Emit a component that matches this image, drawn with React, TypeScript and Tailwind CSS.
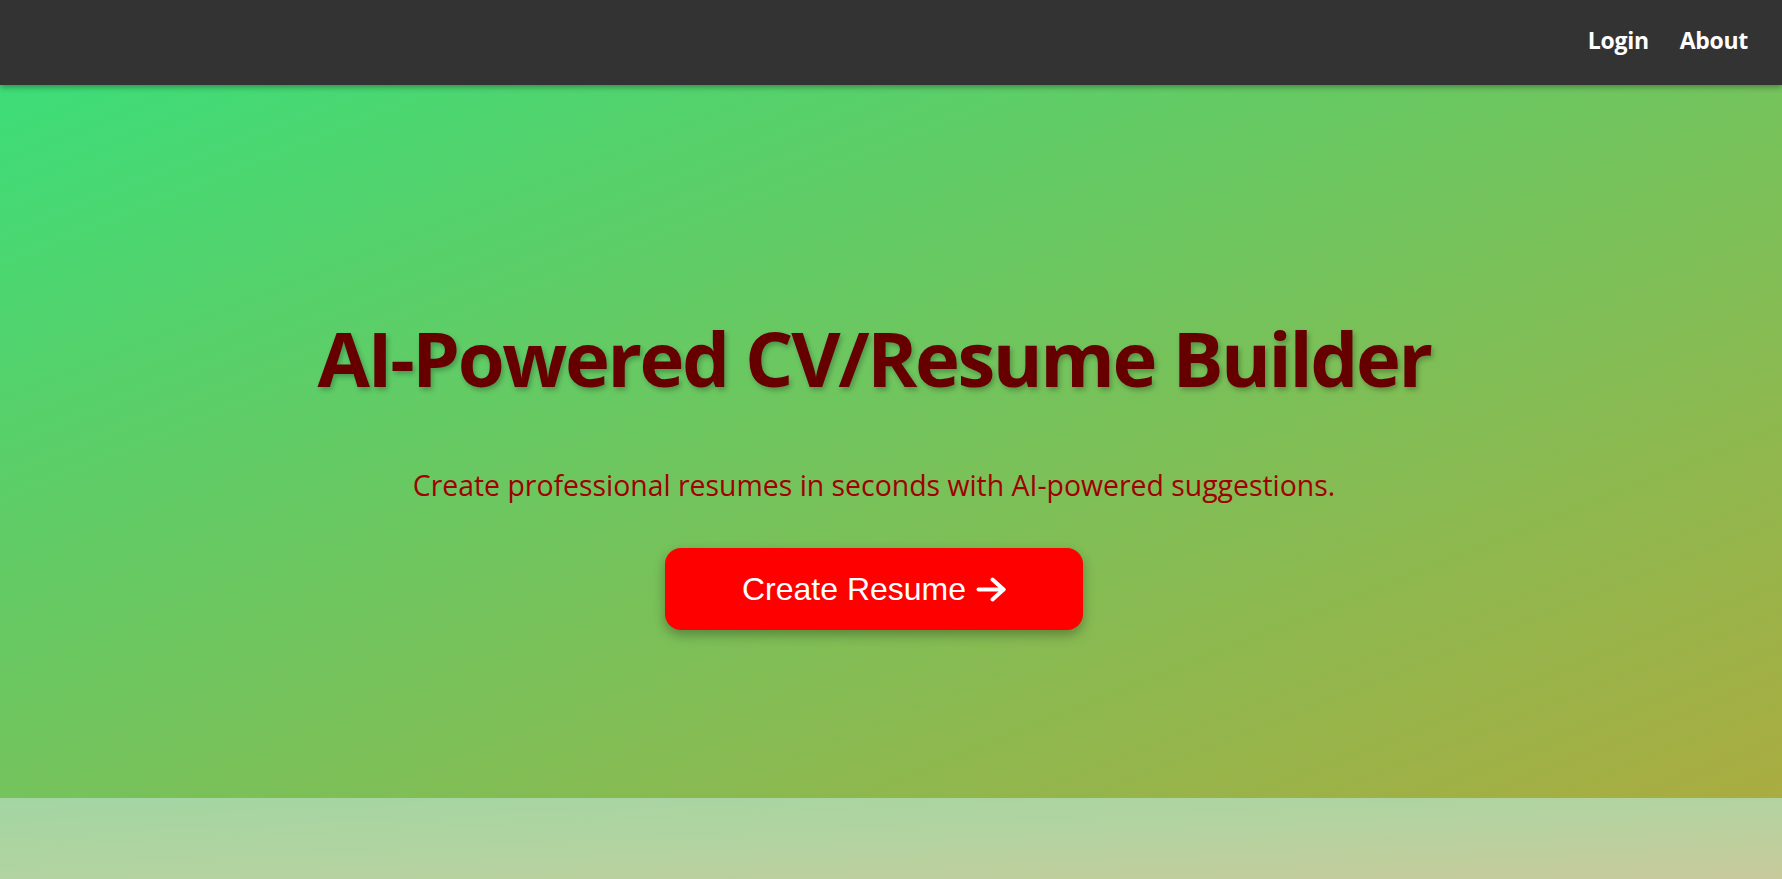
function Navbar() {
  return (
    <nav className="relative z-10 flex h-[85px] items-center justify-end bg-[#333333] pr-[34px] shadow-[0_2px_6px_rgba(0,0,0,0.35)]">
      <ul className="flex items-center gap-[31px] pb-[4px] font-['Open_Sans',sans-serif] text-[23px] font-bold tracking-[-0.3px] text-white">
        <li>
          <a href="#">Login</a>
        </li>
        <li>
          <a href="#">About</a>
        </li>
      </ul>
    </nav>
  );
}

function ArrowIcon() {
  return (
    <svg width="30" height="25" viewBox="0 0 30 25" fill="none" stroke="currentColor" strokeWidth="4" strokeLinecap="round" strokeLinejoin="round">
      <path d="M2.5 12.5h25" />
      <path d="M16.5 2.5l11 10-11 10" />
    </svg>
  );
}

function Hero() {
  return (
    <section className="flex h-[713px] flex-col items-center bg-[linear-gradient(to_bottom_right,#3ddd78,#74c35c_50%,#aaac40)] pr-[34px] pt-[225px]">
      <h1 className="font-['Open_Sans',sans-serif] text-[76px] leading-[96px] font-bold tracking-[-2.4px] text-[#660000] [text-shadow:2px_3px_5px_rgba(0,0,0,0.25)]">
        AI-Powered CV/Resume Builder
      </h1>
      <p className="mt-[58px] font-['Open_Sans',sans-serif] text-[28.4px] leading-[42px] text-[#a00000]">
        Create professional resumes in seconds with AI-powered suggestions.
      </p>
      <button className="mt-[42px] flex h-[82px] w-[418px] items-center justify-center gap-[10px] rounded-[16px] bg-[#ff0000] font-['Liberation_Sans',Arial,sans-serif] text-[32px] text-white shadow-[0_5px_12px_rgba(0,0,0,0.3)]">
        Create Resume
        <ArrowIcon />
      </button>
    </section>
  );
}

export default function App() {
  return (
    <div className="min-h-screen">
      <Navbar />
      <Hero />
      <section className="h-[81px] bg-[linear-gradient(to_bottom_right,#a3d6a3,#b2d3a0_50%,#c8c99a)]" />
    </div>
  );
}
